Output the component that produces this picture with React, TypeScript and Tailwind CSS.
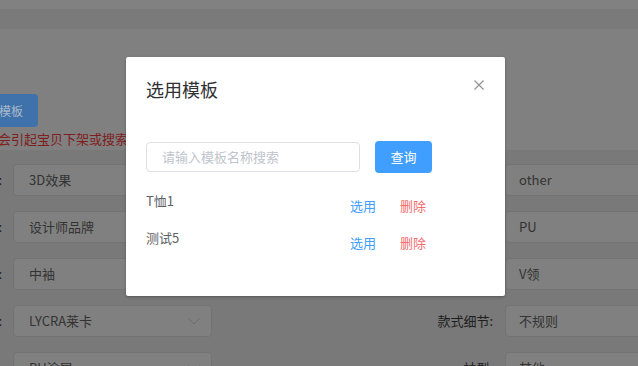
import React from "react";

const font = { fontFamily: '"Noto Sans CJK SC", "Noto Sans", sans-serif' };

const leftRows = [
  { label: "风格:", value: "3D效果", select: false },
  { label: "品牌:", value: "设计师品牌", select: false },
  { label: "袖长:", value: "中袖", select: false },
  { label: "材质:", value: "LYCRA莱卡", select: true },
  { label: "工艺:", value: "PU涂层", select: true },
];

const rightRows = [
  { label: "图案:", value: "other" },
  { label: "面料:", value: "PU" },
  { label: "领型:", value: "V领" },
  { label: "款式细节:", value: "不规则" },
  { label: "袖型:", value: "其他" },
];

const templates = ["T恤1", "测试5"];

function Chevron() {
  return (
    <svg width="12" height="7" viewBox="0 0 12 7" className="mr-[11px] shrink-0">
      <polyline points="0.5,0.5 6,6 11.5,0.5" fill="none" stroke="#6c6c6c" strokeWidth="1" />
    </svg>
  );
}

export default function App() {
  return (
    <div className="relative w-[638px] h-[366px] overflow-hidden bg-[#808080]" style={font}>
      {/* page behind the mask */}
      <div className="h-[9px] bg-[#818181]" />
      <div className="h-[20px] bg-[#7a7a7a]" />
      <div className="h-[121px] pt-[65px]">
        <button className="ml-[-40px] h-[33px] px-[15px] rounded-[4px] bg-[#3f72aa] text-[12px] leading-[33px] text-[#a9b9cb]">
          选用模板
        </button>
        <div className="ml-[-54px] mt-[3px] whitespace-nowrap text-[13px] leading-[18px] text-[#7f1e1e]">
          修改类目会引起宝贝下架或搜索降权，请谨慎操作
        </div>
      </div>
      <div className="h-[216px] bg-[#797979] pt-[14px] flex flex-col gap-[15px]">
        {leftRows.map((row, i) => (
          <div key={row.value} className="flex items-center h-[32px] whitespace-nowrap text-[13px]">
            <div className="ml-[-100px] w-[102px] shrink-0 text-right text-[#1e1e1e]">{row.label}</div>
            <div className="ml-[11px] w-[199px] h-[32px] shrink-0 flex items-center justify-between rounded-[4px] border border-[#737373] bg-[#808080]">
              <span className="pl-[15px] text-[#333333]">{row.value}</span>
              {row.select && <Chevron />}
            </div>
            <div className="ml-[161px] w-[120px] shrink-0 text-right text-[#1e1e1e]">{rightRows[i].label}</div>
            <div className="ml-[12px] w-[200px] h-[32px] shrink-0 flex items-center rounded-[4px] border border-[#737373] bg-[#808080]">
              <span className="pl-[13px] text-[#333333]">{rightRows[i].value}</span>
            </div>
          </div>
        ))}
      </div>

      {/* dialog */}
      <div className="absolute inset-0">
        <div className="relative ml-[126px] mt-[57px] w-[379px] h-[239px] bg-white rounded-[2px] shadow-[0_1px_3px_rgba(0,0,0,0.3)]">
          <div className="px-[20px] pt-[20px]">
            <h2 className="text-[18px] leading-[24px] text-[#303133]">选用模板</h2>
          </div>
          <button className="absolute top-[23px] right-[21px] w-[10px] h-[10px]">
            <svg width="10" height="10" viewBox="0 0 10 10">
              <path d="M0.5 0.5L9.5 9.5M9.5 0.5L0.5 9.5" stroke="#909399" strokeWidth="1.2" />
            </svg>
          </button>
          <div className="px-[20px]">
            <div className="mt-[40px] flex items-center h-[32px]">
              <div className="w-[214px] h-[30px] rounded-[4px] border border-[#dcdfe6] flex items-center">
                <span className="pl-[15px] text-[13px] text-[#c0c4cc]">请输入模板名称搜索</span>
              </div>
              <button className="ml-[15px] w-[57px] h-[32px] rounded-[4px] bg-[#409eff] text-white text-[13px]">
                查询
              </button>
            </div>
            <div className="mt-[18px]">
              {templates.map((name) => (
                <div key={name} className="flex items-start h-[37px] text-[13px] leading-[20px]">
                  <div className="w-[204px] shrink-0 text-[#606266]">{name}</div>
                  <button className="mt-[5px] text-[#409eff]">选用</button>
                  <button className="mt-[5px] ml-[24px] text-[#f56c6c]">删除</button>
                </div>
              ))}
            </div>
          </div>
        </div>
      </div>
    </div>
  );
}
